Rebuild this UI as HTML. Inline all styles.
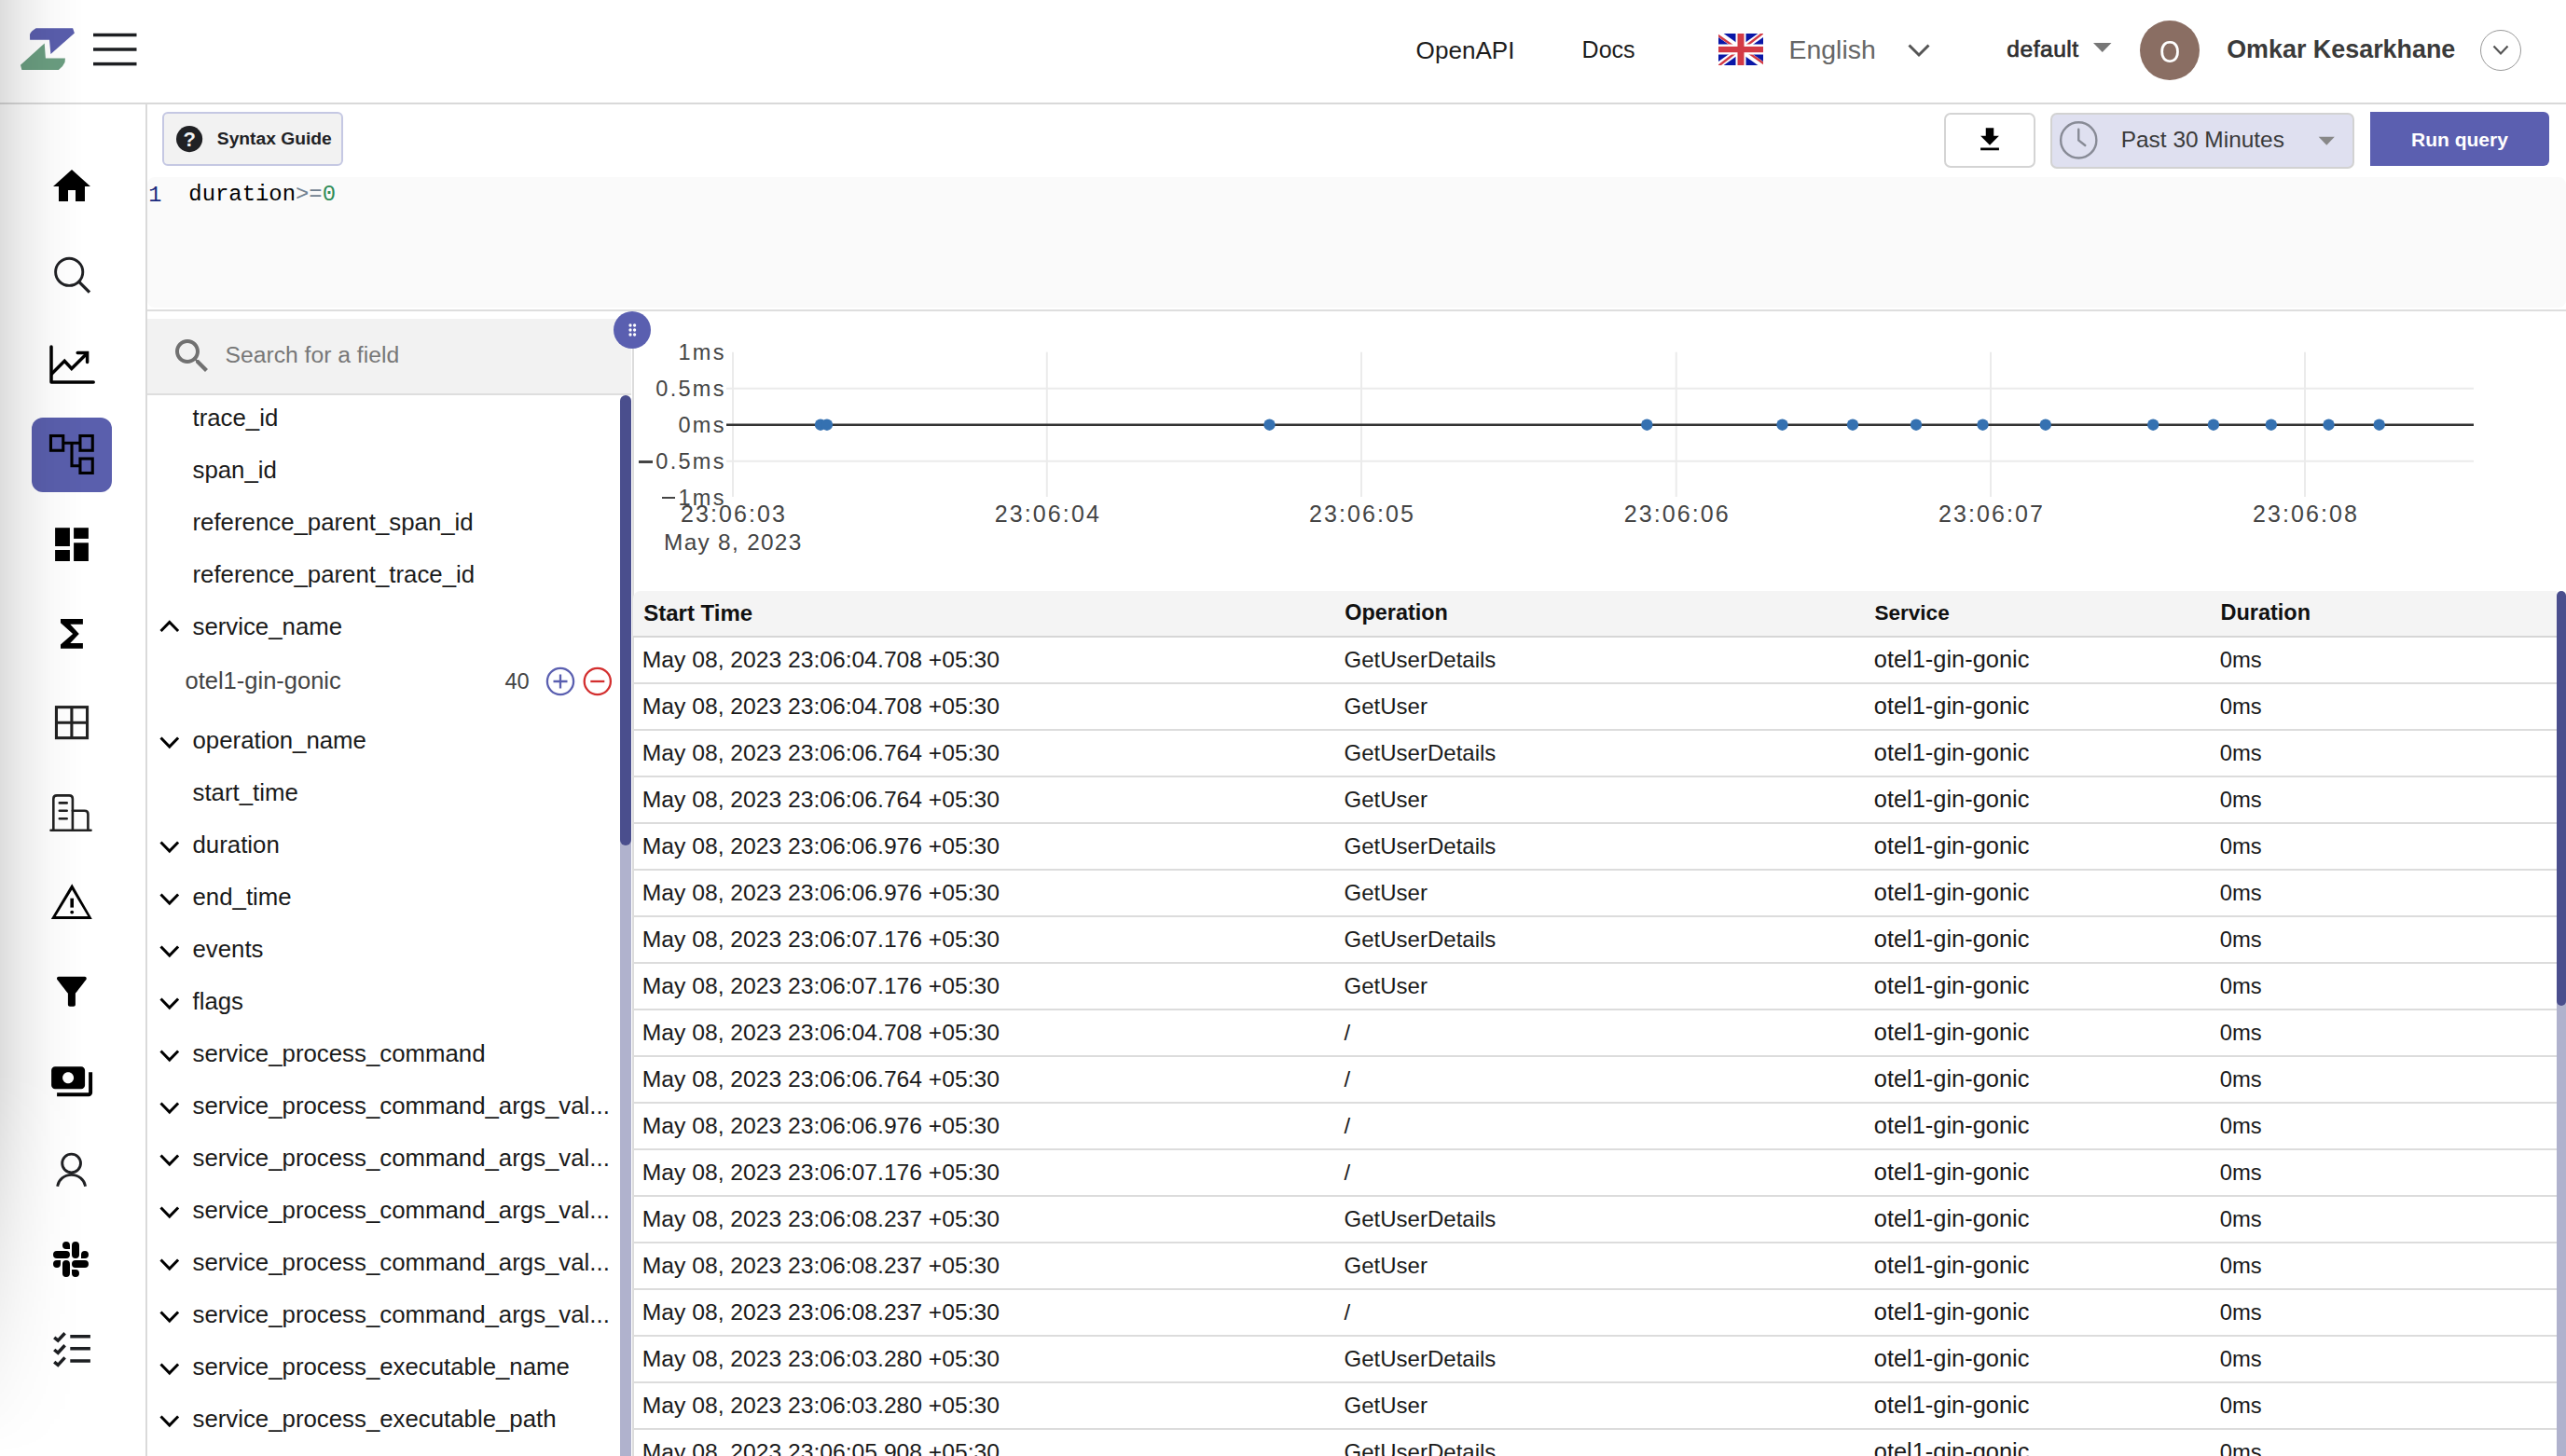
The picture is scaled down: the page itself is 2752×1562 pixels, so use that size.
<!DOCTYPE html>
<html><head><meta charset="utf-8"><title>Traces</title>
<style>
html,body{margin:0;padding:0;}
body{width:2752px;height:1562px;overflow:hidden;position:relative;background:#fff;font-family:"Liberation Sans",sans-serif;}
.t{position:absolute;white-space:nowrap;}
.r{position:absolute;}
svg{position:absolute;overflow:visible;}
</style></head><body>

<div class="r" style="left:0px;top:110px;width:2752px;height:2px;background:#d9d9d9;"></div>
<svg style="left:0;top:0" width="160" height="110" viewBox="0 0 160 110">
<path d="M38.6 30.2 L78.1 30.2 L79.9 35.5 L54.4 58 L53 42.8 L32.1 42.8 L32 37 Q33 33.5 38.6 30.2 Z" fill="#5a5ead"/>
<path d="M47.7 46.6 L48.9 62.4 L69.9 62.4 L69.6 66.8 Q68 71 62.9 75 L23.4 75 L22 69.7 Z" fill="#6b9e81"/>
<rect x="100" y="35.75" width="46.5" height="3.5" fill="#1d1f22"/>
<rect x="100" y="51.25" width="46.5" height="3.5" fill="#1d1f22"/>
<rect x="100" y="66.85" width="46.5" height="3.5" fill="#1d1f22"/>
</svg>
<div class="t" style="left:1518.60px;top:40.50px;font-size:26.1px;line-height:26.1px;font-weight:400;color:#1c1c1c;font-family:'Liberation Sans', sans-serif;">OpenAPI</div>
<div class="t" style="left:1696.60px;top:41.43px;font-size:25.0px;line-height:25.0px;font-weight:400;color:#1c1c1c;font-family:'Liberation Sans', sans-serif;">Docs</div>
<svg style="left:1843px;top:36px" width="48" height="34" viewBox="0 0 48 34" preserveAspectRatio="none">
<defs><clipPath id="fc"><rect width="48" height="34"/></clipPath></defs>
<g clip-path="url(#fc)">
<rect width="48" height="34" fill="#0a17a7"/>
<path d="M0 0 L48 34 M48 0 L0 34" stroke="#fff" stroke-width="6.5"/>
<path d="M-1 1.6 L22 17.8 M49 -1.6 L26 16.2 M-1 35.6 L22 17.8 M49 32.4 L26 16.2" stroke="#d33a45" stroke-width="2.4"/>
<rect x="18.5" y="0" width="11" height="34" fill="#fff"/>
<rect x="0" y="11.5" width="48" height="11" fill="#fff"/>
<rect x="20.5" y="0" width="7" height="34" fill="#d33a45"/>
<rect x="0" y="13.9" width="48" height="6.3" fill="#d33a45"/>
</g></svg>
<div class="t" style="left:1918.60px;top:38.55px;font-size:28.4px;line-height:28.4px;font-weight:400;color:#666666;font-family:'Liberation Sans', sans-serif;">English</div>
<svg style="left:2040px;top:40px" width="36" height="28" viewBox="0 0 36 28"><path d="M7.5 8.5 L18 19 L28.5 8.5" fill="none" stroke="#555" stroke-width="3"/></svg>
<div class="t" style="left:2152.30px;top:41.27px;font-size:24.6px;line-height:24.6px;font-weight:400;color:#2e2e2e;font-family:'Liberation Sans', sans-serif;letter-spacing:0.5px;-webkit-text-stroke:0.7px #2e2e2e;">default</div>
<svg style="left:2240px;top:40px" width="30" height="20"><path d="M5 5.9 L24.5 5.9 L14.75 16 Z" fill="#777"/></svg>
<div style="position:absolute;left:2295px;top:21.6px;width:64px;height:64px;border-radius:50%;background:#8a6e63;"></div>
<div class="t" style="left:2027.00px;width:600px;text-align:center;top:37.71px;font-size:34px;line-height:34px;font-weight:400;color:#ffffff;font-family:'Liberation Sans', sans-serif;transform:scaleX(0.84);">O</div>
<div class="t" style="left:2388.20px;top:40.02px;font-size:26.9px;line-height:26.9px;font-weight:700;color:#3a3a3a;font-family:'Liberation Sans', sans-serif;">Omkar Kesarkhane</div>
<div style="position:absolute;left:2659.7px;top:31.8px;width:42.5px;height:42.5px;border-radius:50%;border:1.2px solid #9a9a9a;"></div>
<svg style="left:2660px;top:32px" width="44" height="44"><path d="M14.5 17.5 L22 25.5 L29.5 17.5" fill="none" stroke="#555" stroke-width="2.2"/></svg>
<div class="r" style="left:156px;top:112px;width:2px;height:1450px;background:#dadada;"></div>
<div class="r" style="left:34px;top:448px;width:86px;height:80px;background:#5a5fad;border-radius:12px;"></div>
<svg style="left:0;top:0" width="156" height="1562" viewBox="0 0 156 1562">
<!-- home -->
<path transform="translate(53 176) scale(2)" d="M10 20v-6h4v6h5v-8h3L12 3 2 12h3v8z" fill="#000"/>
<!-- search -->
<circle cx="74.2" cy="291.8" r="14.6" fill="none" stroke="#202124" stroke-width="2.9"/>
<path d="M85 302.6 L96 313.6" stroke="#202124" stroke-width="3.3"/>
<!-- chart -->
<path d="M55 372 L55 410 L100.2 410" fill="none" stroke="#000" stroke-width="3.5" stroke-linecap="round" stroke-linejoin="round"/>
<path d="M55 401.4 L69.2 387.3 L76.8 395.5 L93.2 379.2" fill="none" stroke="#000" stroke-width="3.5" stroke-linejoin="miter"/>
<path d="M83.2 378.6 L93.6 378.6 L93.6 388.5" fill="none" stroke="#000" stroke-width="3.5" stroke-linecap="round"/>
<!-- traces -->
<g fill="none" stroke="#000" stroke-width="3.1">
<rect x="54.45" y="467.55" width="13.3" height="15.7"/>
<rect x="85.95" y="467.55" width="13.3" height="15.7"/>
<rect x="85.95" y="492.05" width="13.3" height="15.4"/>
<path d="M67.75 475.3 L85.95 475.3 M77 475.3 L77 499.7 L85.95 499.7"/>
</g>
<!-- dashboards -->
<g fill="#000">
<rect x="59.1" y="566.2" width="15.8" height="19.8"/>
<rect x="79.1" y="566.2" width="15.8" height="11.7"/>
<rect x="59.1" y="590" width="15.8" height="12"/>
<rect x="79.1" y="582.3" width="15.8" height="19.7"/>
</g>
<!-- sigma -->
<path d="M65 663.9 L88.9 663.9 L88.9 669.8 L75.3 669.8 L84.8 679.9 L75.3 690 L88.9 690 L88.9 695.8 L65 695.8 L65 691.6 L78.1 679.9 L65 668.2 Z" fill="#000"/>
<!-- grid -->
<g fill="none" stroke="#222" stroke-width="3.1">
<rect x="60.45" y="758.65" width="33.1" height="33"/>
<path d="M76.9 758.65 L76.9 791.65 M60.45 775.2 L93.55 775.2"/>
</g>
<!-- building -->
<g fill="none" stroke="#222" stroke-width="2.6" stroke-linecap="round" stroke-linejoin="round">
<path d="M54.5 890.8 L97.5 890.8"/>
<path d="M57.3 890.8 L57.3 857 Q57.3 853.4 61 853.4 L74.2 853.4 Q77.9 853.4 77.9 857 L77.9 890.8"/>
<path d="M77.9 869.7 L90.7 869.7 Q94.4 869.7 94.4 873.4 L94.4 890.8"/>
<path d="M63.8 861.4 L71.7 861.4 M63.8 869.7 L71.7 869.7 M63.8 878.3 L71.7 878.3"/>
</g>
<!-- warning -->
<path d="M77.2 948.3 L54.8 986 L98.8 986 Z M77.2 954.4 L59.8 983 L94.2 983 Z" fill="#000" fill-rule="evenodd"/><rect x="75.4" y="963.7" width="3.6" height="9.9" fill="#000"/><circle cx="77.2" cy="978.6" r="1.9" fill="#000"/>
<!-- funnel -->
<path transform="translate(52.9 1039.8) scale(2)" d="M4.25 5.61C6.27 8.2 10 13 10 13v6c0 .55.45 1 1 1h2c.55 0 1-.45 1-1v-6s3.72-4.8 5.74-7.39c.51-.66.04-1.61-.79-1.61H5.04c-.83 0-1.3.95-.79 1.61z" fill="#000"/>
<!-- payments -->
<path transform="translate(53.1 1136.2) scale(2)" d="M19 14V6c0-1.1-.9-2-2-2H3c-1.1 0-2 .9-2 2v8c0 1.1.9 2 2 2h14c1.1 0 2-.9 2-2zm-9-1c-1.66 0-3-1.34-3-3s1.34-3 3-3 3 1.34 3 3-1.34 3-3 3zm13-6v11c0 1.1-.9 2-2 2H4v-2h17V7h2z" fill="#000"/>
<!-- person -->
<g fill="none" stroke="#202124" stroke-width="2.9">
<circle cx="76.6" cy="1248" r="9.9"/>
<path d="M61.7 1272.8 A15 14 0 0 1 91.5 1272.8"/>
</g>
<!-- slack -->
<path transform="translate(57 1332) scale(1.583)" fill="#000" d="M5.042 15.165a2.528 2.528 0 0 1-2.52 2.523A2.528 2.528 0 0 1 0 15.165a2.527 2.527 0 0 1 2.522-2.52h2.52v2.52zM6.313 15.165a2.527 2.527 0 0 1 2.521-2.52 2.527 2.527 0 0 1 2.521 2.52v6.313A2.528 2.528 0 0 1 8.834 24a2.528 2.528 0 0 1-2.521-2.522v-6.313zM8.834 5.042a2.528 2.528 0 0 1-2.521-2.52A2.528 2.528 0 0 1 8.834 0a2.528 2.528 0 0 1 2.521 2.522v2.52H8.834zM8.834 6.313a2.528 2.528 0 0 1 2.521 2.521 2.528 2.528 0 0 1-2.521 2.521H2.522A2.528 2.528 0 0 1 0 8.834a2.528 2.528 0 0 1 2.522-2.521h6.312zM18.956 8.834a2.528 2.528 0 0 1 2.522-2.521A2.528 2.528 0 0 1 24 8.834a2.528 2.528 0 0 1-2.522 2.521h-2.522V8.834zM17.688 8.834a2.528 2.528 0 0 1-2.523 2.521 2.527 2.527 0 0 1-2.52-2.521V2.522A2.527 2.527 0 0 1 15.165 0a2.528 2.528 0 0 1 2.523 2.522v6.312zM15.165 18.956a2.528 2.528 0 0 1 2.523 2.522A2.528 2.528 0 0 1 15.165 24a2.527 2.527 0 0 1-2.52-2.522v-2.522h2.52zM15.165 17.688a2.527 2.527 0 0 1-2.52-2.523 2.526 2.526 0 0 1 2.52-2.52h6.313A2.527 2.527 0 0 1 24 15.165a2.528 2.528 0 0 1-2.522 2.523h-6.313z"/>
<!-- checklist -->
<g fill="none" stroke="#1d1f22" stroke-width="3.5">
<path d="M75.3 1433.75 L96.9 1433.75 M75.3 1446.8 L96.9 1446.8 M75.3 1460 L96.9 1460"/>
<path d="M58.2 1434.9 L62.2 1438.2 L69.6 1430.2 M58.2 1448 L62.2 1451.3 L69.6 1443.3 M58.2 1461.1 L62.2 1464.4 L69.6 1456.4"/>
</g>
</svg>
<div style="position:absolute;left:174.3px;top:120.3px;width:189.4px;height:53.3px;border:2px solid #c5c8e3;border-radius:6px;background:#f2f2f2;"></div>
<svg style="left:189px;top:134.7px" width="28.2" height="28.2" viewBox="0 0 28.2 28.2"><circle cx="14.1" cy="14.1" r="14.1" fill="#202124"/></svg>
<div class="t" style="left:-96.90px;width:600px;text-align:center;top:138.87px;font-size:22px;line-height:22px;font-weight:700;color:#f2f2f2;font-family:'Liberation Sans', sans-serif;">?</div>
<div class="t" style="left:232.80px;top:138.70px;font-size:19.25px;line-height:19.25px;font-weight:700;color:#202124;font-family:'Liberation Sans', sans-serif;">Syntax Guide</div>
<div style="position:absolute;left:2085.4px;top:120.6px;width:93.6px;height:55px;border:2px solid #d4d4d4;border-radius:7px;background:#fff;"></div>
<svg style="left:2116.9px;top:132.8px" width="34" height="34" viewBox="0 0 24 24" transform=""><path transform="scale(1)" d="M19 9h-4V3H9v6H5l7 7 7-7zM5 18v2h14v-2H5z" fill="#000"/></svg>
<div style="position:absolute;left:2199.4px;top:120.6px;width:322.1px;height:56.8px;border:2px solid #d2d2d2;border-radius:7px;background:#dfe0f0;"></div>
<svg style="left:2200px;top:121px" width="60" height="60"><g fill="none" stroke="#888b96" stroke-width="2.4" stroke-linecap="round"><circle cx="29.25" cy="29.4" r="19.1"/><path d="M29.25 17.7 L29.25 29.4 L36.3 35"/></g></svg>
<div class="t" style="left:2274.70px;top:137.70px;font-size:24.45px;line-height:24.45px;font-weight:400;color:#3a3a3a;font-family:'Liberation Sans', sans-serif;">Past 30 Minutes</div>
<svg style="left:2480px;top:140px" width="30" height="20"><path d="M6.7 6.7 L23.8 6.7 L15.25 15.7 Z" fill="#888"/></svg>
<div style="position:absolute;left:2542px;top:120px;width:192px;height:57.8px;border-radius:0 6px 6px 0;background:#5b5fb0;"></div>
<div class="t" style="left:2586.00px;top:139.19px;font-size:21.03px;line-height:21.03px;font-weight:700;color:#ffffff;font-family:'Liberation Sans', sans-serif;">Run query</div>
<div class="r" style="left:158px;top:190px;width:2594px;height:140px;background:#fafafa;border-radius:8px;"></div>
<div class="r" style="left:158px;top:332px;width:2594px;height:2px;background:#dedede;"></div>
<div class="t" style="left:159.30px;top:197.72px;font-size:23.6px;line-height:23.6px;font-weight:400;color:#1b2a7d;font-family:'Liberation Mono', monospace;">1</div>
<div class="t" style="left:202.3px;top:197.49px;font-size:23.9px;line-height:23.9px;font-family:'Liberation Mono', monospace;color:#000;">duration<span style="color:#708090">&gt;=</span><span style="color:#2e8b57">0</span></div>
<div class="r" style="left:158px;top:342px;width:519px;height:80px;background:#f2f2f2;"></div>
<div class="r" style="left:158px;top:422px;width:519px;height:2px;background:#dedede;"></div>
<svg style="left:182.1px;top:358px" width="48" height="48" viewBox="0 0 24 24"><path d="M15.5 14h-.79l-.28-.27C15.41 12.59 16 11.11 16 9.5 16 5.91 13.09 3 9.5 3S3 5.91 3 9.5 5.91 16 9.5 16c1.61 0 3.09-.59 4.23-1.57l.27.28v.79l5 4.99L20.49 19l-4.99-5zm-6 0C7.01 14 5 11.99 5 9.5S7.01 5 9.5 5 14 7.01 14 9.5 11.99 14 9.5 14z" fill="#717171"/></svg>
<div class="t" style="left:241.50px;top:369.09px;font-size:24.7px;line-height:24.7px;font-weight:400;color:#777777;font-family:'Liberation Sans', sans-serif;">Search for a field</div>
<div class="t" style="left:206.50px;top:435.66px;font-size:25.8px;line-height:25.8px;font-weight:400;color:#1a1a1a;font-family:'Liberation Sans', sans-serif;">trace_id</div>
<div class="t" style="left:206.50px;top:491.66px;font-size:25.8px;line-height:25.8px;font-weight:400;color:#1a1a1a;font-family:'Liberation Sans', sans-serif;">span_id</div>
<div class="t" style="left:206.50px;top:547.66px;font-size:25.8px;line-height:25.8px;font-weight:400;color:#1a1a1a;font-family:'Liberation Sans', sans-serif;">reference_parent_span_id</div>
<div class="t" style="left:206.50px;top:603.66px;font-size:25.8px;line-height:25.8px;font-weight:400;color:#1a1a1a;font-family:'Liberation Sans', sans-serif;">reference_parent_trace_id</div>
<div class="t" style="left:206.50px;top:659.76px;font-size:25.8px;line-height:25.8px;font-weight:400;color:#1a1a1a;font-family:'Liberation Sans', sans-serif;">service_name</div>
<svg style="left:160px;top:650px" width="40" height="40"><path d="M12.5 27 L21.8 17.5 L31.1 27" fill="none" stroke="#000" stroke-width="3"/></svg>
<div class="t" style="left:198.50px;top:717.71px;font-size:25.5px;line-height:25.5px;font-weight:400;color:#444444;font-family:'Liberation Sans', sans-serif;">otel1-gin-gonic</div>
<div class="t" style="left:541.50px;top:720.32px;font-size:23.6px;line-height:23.6px;font-weight:400;color:#444444;font-family:'Liberation Sans', sans-serif;">40</div>
<svg style="left:580px;top:710px" width="82" height="42"><circle cx="21" cy="21" r="14.1" fill="none" stroke="#5a5fb0" stroke-width="2.3"/><path d="M21 13.5 L21 28.5 M13.5 21 L28.5 21" stroke="#5a5fb0" stroke-width="2.3"/><circle cx="60.8" cy="21" r="14.1" fill="none" stroke="#d32f2f" stroke-width="2.3"/><path d="M53.3 21 L68.3 21" stroke="#d32f2f" stroke-width="2.3"/></svg>
<div class="t" style="left:206.50px;top:781.96px;font-size:25.8px;line-height:25.8px;font-weight:400;color:#1a1a1a;font-family:'Liberation Sans', sans-serif;">operation_name</div>
<svg style="left:160px;top:773px" width="40" height="40"><path d="M12.5 18.5 L21.8 28 L31.1 18.5" fill="none" stroke="#000" stroke-width="3"/></svg>
<div class="t" style="left:206.50px;top:837.96px;font-size:25.8px;line-height:25.8px;font-weight:400;color:#1a1a1a;font-family:'Liberation Sans', sans-serif;">start_time</div>
<div class="t" style="left:206.50px;top:893.96px;font-size:25.8px;line-height:25.8px;font-weight:400;color:#1a1a1a;font-family:'Liberation Sans', sans-serif;">duration</div>
<svg style="left:160px;top:885px" width="40" height="40"><path d="M12.5 18.5 L21.8 28 L31.1 18.5" fill="none" stroke="#000" stroke-width="3"/></svg>
<div class="t" style="left:206.50px;top:949.96px;font-size:25.8px;line-height:25.8px;font-weight:400;color:#1a1a1a;font-family:'Liberation Sans', sans-serif;">end_time</div>
<svg style="left:160px;top:941px" width="40" height="40"><path d="M12.5 18.5 L21.8 28 L31.1 18.5" fill="none" stroke="#000" stroke-width="3"/></svg>
<div class="t" style="left:206.50px;top:1005.96px;font-size:25.8px;line-height:25.8px;font-weight:400;color:#1a1a1a;font-family:'Liberation Sans', sans-serif;">events</div>
<svg style="left:160px;top:997px" width="40" height="40"><path d="M12.5 18.5 L21.8 28 L31.1 18.5" fill="none" stroke="#000" stroke-width="3"/></svg>
<div class="t" style="left:206.50px;top:1061.96px;font-size:25.8px;line-height:25.8px;font-weight:400;color:#1a1a1a;font-family:'Liberation Sans', sans-serif;">flags</div>
<svg style="left:160px;top:1053px" width="40" height="40"><path d="M12.5 18.5 L21.8 28 L31.1 18.5" fill="none" stroke="#000" stroke-width="3"/></svg>
<div class="t" style="left:206.50px;top:1117.96px;font-size:25.8px;line-height:25.8px;font-weight:400;color:#1a1a1a;font-family:'Liberation Sans', sans-serif;">service_process_command</div>
<svg style="left:160px;top:1109px" width="40" height="40"><path d="M12.5 18.5 L21.8 28 L31.1 18.5" fill="none" stroke="#000" stroke-width="3"/></svg>
<div class="t" style="left:206.50px;top:1173.96px;font-size:25.8px;line-height:25.8px;font-weight:400;color:#1a1a1a;font-family:'Liberation Sans', sans-serif;">service_process_command_args_val...</div>
<svg style="left:160px;top:1165px" width="40" height="40"><path d="M12.5 18.5 L21.8 28 L31.1 18.5" fill="none" stroke="#000" stroke-width="3"/></svg>
<div class="t" style="left:206.50px;top:1229.96px;font-size:25.8px;line-height:25.8px;font-weight:400;color:#1a1a1a;font-family:'Liberation Sans', sans-serif;">service_process_command_args_val...</div>
<svg style="left:160px;top:1221px" width="40" height="40"><path d="M12.5 18.5 L21.8 28 L31.1 18.5" fill="none" stroke="#000" stroke-width="3"/></svg>
<div class="t" style="left:206.50px;top:1285.96px;font-size:25.8px;line-height:25.8px;font-weight:400;color:#1a1a1a;font-family:'Liberation Sans', sans-serif;">service_process_command_args_val...</div>
<svg style="left:160px;top:1277px" width="40" height="40"><path d="M12.5 18.5 L21.8 28 L31.1 18.5" fill="none" stroke="#000" stroke-width="3"/></svg>
<div class="t" style="left:206.50px;top:1341.96px;font-size:25.8px;line-height:25.8px;font-weight:400;color:#1a1a1a;font-family:'Liberation Sans', sans-serif;">service_process_command_args_val...</div>
<svg style="left:160px;top:1333px" width="40" height="40"><path d="M12.5 18.5 L21.8 28 L31.1 18.5" fill="none" stroke="#000" stroke-width="3"/></svg>
<div class="t" style="left:206.50px;top:1397.96px;font-size:25.8px;line-height:25.8px;font-weight:400;color:#1a1a1a;font-family:'Liberation Sans', sans-serif;">service_process_command_args_val...</div>
<svg style="left:160px;top:1389px" width="40" height="40"><path d="M12.5 18.5 L21.8 28 L31.1 18.5" fill="none" stroke="#000" stroke-width="3"/></svg>
<div class="t" style="left:206.50px;top:1453.96px;font-size:25.8px;line-height:25.8px;font-weight:400;color:#1a1a1a;font-family:'Liberation Sans', sans-serif;">service_process_executable_name</div>
<svg style="left:160px;top:1445px" width="40" height="40"><path d="M12.5 18.5 L21.8 28 L31.1 18.5" fill="none" stroke="#000" stroke-width="3"/></svg>
<div class="t" style="left:206.50px;top:1509.96px;font-size:25.8px;line-height:25.8px;font-weight:400;color:#1a1a1a;font-family:'Liberation Sans', sans-serif;">service_process_executable_path</div>
<svg style="left:160px;top:1501px" width="40" height="40"><path d="M12.5 18.5 L21.8 28 L31.1 18.5" fill="none" stroke="#000" stroke-width="3"/></svg>
<div class="r" style="left:665px;top:440px;width:12px;height:1122px;background:#b0b2cd;"></div>
<div class="r" style="left:665px;top:424px;width:12px;height:482.5px;background:#4a4e8d;border-radius:6px;"></div>
<div class="r" style="left:678px;top:374px;width:2px;height:1188px;background:#dcdcdc;"></div>
<svg style="left:658px;top:334px" width="40" height="40"><circle cx="20" cy="20" r="20" fill="#5a5fb0"/><g fill="#fff"><circle cx="18" cy="15" r="1.65"/><circle cx="22.6" cy="15" r="1.65"/><circle cx="18" cy="20" r="1.65"/><circle cx="22.6" cy="20" r="1.65"/><circle cx="18" cy="25" r="1.65"/><circle cx="22.6" cy="25" r="1.65"/></g></svg>
<svg style="left:0;top:0" width="2752" height="640" viewBox="0 0 2752 640">
<path d="M786 377.7 L786 533" stroke="#ebebeb" stroke-width="2"/>
<path d="M1122.8 377.7 L1122.8 533" stroke="#ebebeb" stroke-width="2"/>
<path d="M1460 377.7 L1460 533" stroke="#ebebeb" stroke-width="2"/>
<path d="M1797.7 377.7 L1797.7 533" stroke="#ebebeb" stroke-width="2"/>
<path d="M2135 377.7 L2135 533" stroke="#ebebeb" stroke-width="2"/>
<path d="M2472 377.7 L2472 533" stroke="#ebebeb" stroke-width="2"/>
<path d="M779 416.7 L2653 416.7" stroke="#ebebeb" stroke-width="2"/>
<path d="M779 494.8 L2653 494.8" stroke="#ebebeb" stroke-width="2"/>
<path d="M779 455.7 L2653 455.7" stroke="#333" stroke-width="2.6"/>
<circle cx="880" cy="455.7" r="6.2" fill="#3571b1"/>
<circle cx="886.9" cy="455.7" r="6.2" fill="#3571b1"/>
<circle cx="1361.5" cy="455.7" r="6.2" fill="#3571b1"/>
<circle cx="1766.3" cy="455.7" r="6.2" fill="#3571b1"/>
<circle cx="1911.5" cy="455.7" r="6.2" fill="#3571b1"/>
<circle cx="1987" cy="455.7" r="6.2" fill="#3571b1"/>
<circle cx="2055" cy="455.7" r="6.2" fill="#3571b1"/>
<circle cx="2126.5" cy="455.7" r="6.2" fill="#3571b1"/>
<circle cx="2193.8" cy="455.7" r="6.2" fill="#3571b1"/>
<circle cx="2309.2" cy="455.7" r="6.2" fill="#3571b1"/>
<circle cx="2373.9" cy="455.7" r="6.2" fill="#3571b1"/>
<circle cx="2435.8" cy="455.7" r="6.2" fill="#3571b1"/>
<circle cx="2497.5" cy="455.7" r="6.2" fill="#3571b1"/>
<circle cx="2551.7" cy="455.7" r="6.2" fill="#3571b1"/>
</svg>
<div class="t" style="right:1975.50px;top:367.30px;font-size:23.5px;line-height:23.5px;font-weight:400;color:#444444;font-family:'Liberation Sans', sans-serif;text-align:right;letter-spacing:2.3px;margin-right:-2.3px;">1ms</div>
<div class="t" style="right:1975.50px;top:406.30px;font-size:23.5px;line-height:23.5px;font-weight:400;color:#444444;font-family:'Liberation Sans', sans-serif;text-align:right;letter-spacing:2.3px;margin-right:-2.3px;">0.5ms</div>
<div class="t" style="right:1975.50px;top:445.30px;font-size:23.5px;line-height:23.5px;font-weight:400;color:#444444;font-family:'Liberation Sans', sans-serif;text-align:right;letter-spacing:2.3px;margin-right:-2.3px;">0ms</div>
<div class="t" style="right:1975.50px;top:484.30px;font-size:23.5px;line-height:23.5px;font-weight:400;color:#444444;font-family:'Liberation Sans', sans-serif;text-align:right;letter-spacing:2.3px;margin-right:-2.3px;"><span style="display:inline-block;width:14.5px;height:2.2px;background:#444;vertical-align:6.8px;margin-right:3.5px"></span>0.5ms</div>
<div class="t" style="right:1975.50px;top:523.10px;font-size:23.5px;line-height:23.5px;font-weight:400;color:#444444;font-family:'Liberation Sans', sans-serif;text-align:right;letter-spacing:2.3px;margin-right:-2.3px;"><span style="display:inline-block;width:14.5px;height:2.2px;background:#444;vertical-align:6.8px;margin-right:3.5px"></span>1ms</div>
<div class="t" style="left:486.00px;width:600px;text-align:center;top:538.83px;font-size:25px;line-height:25px;font-weight:400;color:#444444;font-family:'Liberation Sans', sans-serif;letter-spacing:2.1px;text-indent:2.1px;">23:06:03</div>
<div class="t" style="left:822.80px;width:600px;text-align:center;top:538.83px;font-size:25px;line-height:25px;font-weight:400;color:#444444;font-family:'Liberation Sans', sans-serif;letter-spacing:2.1px;text-indent:2.1px;">23:06:04</div>
<div class="t" style="left:1160.00px;width:600px;text-align:center;top:538.83px;font-size:25px;line-height:25px;font-weight:400;color:#444444;font-family:'Liberation Sans', sans-serif;letter-spacing:2.1px;text-indent:2.1px;">23:06:05</div>
<div class="t" style="left:1497.70px;width:600px;text-align:center;top:538.83px;font-size:25px;line-height:25px;font-weight:400;color:#444444;font-family:'Liberation Sans', sans-serif;letter-spacing:2.1px;text-indent:2.1px;">23:06:06</div>
<div class="t" style="left:1835.00px;width:600px;text-align:center;top:538.83px;font-size:25px;line-height:25px;font-weight:400;color:#444444;font-family:'Liberation Sans', sans-serif;letter-spacing:2.1px;text-indent:2.1px;">23:06:07</div>
<div class="t" style="left:2172.00px;width:600px;text-align:center;top:538.83px;font-size:25px;line-height:25px;font-weight:400;color:#444444;font-family:'Liberation Sans', sans-serif;letter-spacing:2.1px;text-indent:2.1px;">23:06:08</div>
<div class="t" style="left:485.70px;width:600px;text-align:center;top:570.24px;font-size:24.4px;line-height:24.4px;font-weight:400;color:#444444;font-family:'Liberation Sans', sans-serif;letter-spacing:1.3px;text-indent:1.3px;">May 8, 2023</div>
<div class="r" style="left:679.4px;top:634px;width:2062.6px;height:49px;background:#f4f4f4;border-top-left-radius:8px;"></div>
<div class="r" style="left:679.4px;top:682px;width:2062.6px;height:2px;background:#d6d6d6;"></div>
<div class="t" style="left:690.30px;top:645.69px;font-size:23.99px;line-height:23.99px;font-weight:700;color:#111111;font-family:'Liberation Sans', sans-serif;">Start Time</div>
<div class="t" style="left:1442.30px;top:646.19px;font-size:23.4px;line-height:23.4px;font-weight:700;color:#111111;font-family:'Liberation Sans', sans-serif;">Operation</div>
<div class="t" style="left:2010.50px;top:646.92px;font-size:22.54px;line-height:22.54px;font-weight:700;color:#111111;font-family:'Liberation Sans', sans-serif;">Service</div>
<div class="t" style="left:2381.50px;top:646.13px;font-size:23.47px;line-height:23.47px;font-weight:700;color:#111111;font-family:'Liberation Sans', sans-serif;">Duration</div>
<div class="t" style="left:688.80px;top:695.61px;font-size:24.67px;line-height:24.67px;font-weight:400;color:#1a1a1a;font-family:'Liberation Sans', sans-serif;">May 08, 2023 23:06:04.708 +05:30</div>
<div class="t" style="left:1441.60px;top:696.18px;font-size:24.0px;line-height:24.0px;font-weight:400;color:#1a1a1a;font-family:'Liberation Sans', sans-serif;">GetUserDetails</div>
<div class="t" style="left:2009.80px;top:694.99px;font-size:25.4px;line-height:25.4px;font-weight:400;color:#1a1a1a;font-family:'Liberation Sans', sans-serif;">otel1-gin-gonic</div>
<div class="t" style="left:2380.80px;top:696.35px;font-size:23.8px;line-height:23.8px;font-weight:400;color:#1a1a1a;font-family:'Liberation Sans', sans-serif;">0ms</div>
<div class="r" style="left:679.4px;top:732px;width:2062.6px;height:2px;background:#dcdcdc;"></div>
<div class="t" style="left:688.80px;top:745.61px;font-size:24.67px;line-height:24.67px;font-weight:400;color:#1a1a1a;font-family:'Liberation Sans', sans-serif;">May 08, 2023 23:06:04.708 +05:30</div>
<div class="t" style="left:1441.60px;top:746.18px;font-size:24.0px;line-height:24.0px;font-weight:400;color:#1a1a1a;font-family:'Liberation Sans', sans-serif;">GetUser</div>
<div class="t" style="left:2009.80px;top:744.99px;font-size:25.4px;line-height:25.4px;font-weight:400;color:#1a1a1a;font-family:'Liberation Sans', sans-serif;">otel1-gin-gonic</div>
<div class="t" style="left:2380.80px;top:746.35px;font-size:23.8px;line-height:23.8px;font-weight:400;color:#1a1a1a;font-family:'Liberation Sans', sans-serif;">0ms</div>
<div class="r" style="left:679.4px;top:782px;width:2062.6px;height:2px;background:#dcdcdc;"></div>
<div class="t" style="left:688.80px;top:795.61px;font-size:24.67px;line-height:24.67px;font-weight:400;color:#1a1a1a;font-family:'Liberation Sans', sans-serif;">May 08, 2023 23:06:06.764 +05:30</div>
<div class="t" style="left:1441.60px;top:796.18px;font-size:24.0px;line-height:24.0px;font-weight:400;color:#1a1a1a;font-family:'Liberation Sans', sans-serif;">GetUserDetails</div>
<div class="t" style="left:2009.80px;top:794.99px;font-size:25.4px;line-height:25.4px;font-weight:400;color:#1a1a1a;font-family:'Liberation Sans', sans-serif;">otel1-gin-gonic</div>
<div class="t" style="left:2380.80px;top:796.35px;font-size:23.8px;line-height:23.8px;font-weight:400;color:#1a1a1a;font-family:'Liberation Sans', sans-serif;">0ms</div>
<div class="r" style="left:679.4px;top:832px;width:2062.6px;height:2px;background:#dcdcdc;"></div>
<div class="t" style="left:688.80px;top:845.61px;font-size:24.67px;line-height:24.67px;font-weight:400;color:#1a1a1a;font-family:'Liberation Sans', sans-serif;">May 08, 2023 23:06:06.764 +05:30</div>
<div class="t" style="left:1441.60px;top:846.18px;font-size:24.0px;line-height:24.0px;font-weight:400;color:#1a1a1a;font-family:'Liberation Sans', sans-serif;">GetUser</div>
<div class="t" style="left:2009.80px;top:844.99px;font-size:25.4px;line-height:25.4px;font-weight:400;color:#1a1a1a;font-family:'Liberation Sans', sans-serif;">otel1-gin-gonic</div>
<div class="t" style="left:2380.80px;top:846.35px;font-size:23.8px;line-height:23.8px;font-weight:400;color:#1a1a1a;font-family:'Liberation Sans', sans-serif;">0ms</div>
<div class="r" style="left:679.4px;top:882px;width:2062.6px;height:2px;background:#dcdcdc;"></div>
<div class="t" style="left:688.80px;top:895.61px;font-size:24.67px;line-height:24.67px;font-weight:400;color:#1a1a1a;font-family:'Liberation Sans', sans-serif;">May 08, 2023 23:06:06.976 +05:30</div>
<div class="t" style="left:1441.60px;top:896.18px;font-size:24.0px;line-height:24.0px;font-weight:400;color:#1a1a1a;font-family:'Liberation Sans', sans-serif;">GetUserDetails</div>
<div class="t" style="left:2009.80px;top:894.99px;font-size:25.4px;line-height:25.4px;font-weight:400;color:#1a1a1a;font-family:'Liberation Sans', sans-serif;">otel1-gin-gonic</div>
<div class="t" style="left:2380.80px;top:896.35px;font-size:23.8px;line-height:23.8px;font-weight:400;color:#1a1a1a;font-family:'Liberation Sans', sans-serif;">0ms</div>
<div class="r" style="left:679.4px;top:932px;width:2062.6px;height:2px;background:#dcdcdc;"></div>
<div class="t" style="left:688.80px;top:945.61px;font-size:24.67px;line-height:24.67px;font-weight:400;color:#1a1a1a;font-family:'Liberation Sans', sans-serif;">May 08, 2023 23:06:06.976 +05:30</div>
<div class="t" style="left:1441.60px;top:946.18px;font-size:24.0px;line-height:24.0px;font-weight:400;color:#1a1a1a;font-family:'Liberation Sans', sans-serif;">GetUser</div>
<div class="t" style="left:2009.80px;top:944.99px;font-size:25.4px;line-height:25.4px;font-weight:400;color:#1a1a1a;font-family:'Liberation Sans', sans-serif;">otel1-gin-gonic</div>
<div class="t" style="left:2380.80px;top:946.35px;font-size:23.8px;line-height:23.8px;font-weight:400;color:#1a1a1a;font-family:'Liberation Sans', sans-serif;">0ms</div>
<div class="r" style="left:679.4px;top:982px;width:2062.6px;height:2px;background:#dcdcdc;"></div>
<div class="t" style="left:688.80px;top:995.61px;font-size:24.67px;line-height:24.67px;font-weight:400;color:#1a1a1a;font-family:'Liberation Sans', sans-serif;">May 08, 2023 23:06:07.176 +05:30</div>
<div class="t" style="left:1441.60px;top:996.18px;font-size:24.0px;line-height:24.0px;font-weight:400;color:#1a1a1a;font-family:'Liberation Sans', sans-serif;">GetUserDetails</div>
<div class="t" style="left:2009.80px;top:994.99px;font-size:25.4px;line-height:25.4px;font-weight:400;color:#1a1a1a;font-family:'Liberation Sans', sans-serif;">otel1-gin-gonic</div>
<div class="t" style="left:2380.80px;top:996.35px;font-size:23.8px;line-height:23.8px;font-weight:400;color:#1a1a1a;font-family:'Liberation Sans', sans-serif;">0ms</div>
<div class="r" style="left:679.4px;top:1032px;width:2062.6px;height:2px;background:#dcdcdc;"></div>
<div class="t" style="left:688.80px;top:1045.61px;font-size:24.67px;line-height:24.67px;font-weight:400;color:#1a1a1a;font-family:'Liberation Sans', sans-serif;">May 08, 2023 23:06:07.176 +05:30</div>
<div class="t" style="left:1441.60px;top:1046.18px;font-size:24.0px;line-height:24.0px;font-weight:400;color:#1a1a1a;font-family:'Liberation Sans', sans-serif;">GetUser</div>
<div class="t" style="left:2009.80px;top:1044.99px;font-size:25.4px;line-height:25.4px;font-weight:400;color:#1a1a1a;font-family:'Liberation Sans', sans-serif;">otel1-gin-gonic</div>
<div class="t" style="left:2380.80px;top:1046.35px;font-size:23.8px;line-height:23.8px;font-weight:400;color:#1a1a1a;font-family:'Liberation Sans', sans-serif;">0ms</div>
<div class="r" style="left:679.4px;top:1082px;width:2062.6px;height:2px;background:#dcdcdc;"></div>
<div class="t" style="left:688.80px;top:1095.61px;font-size:24.67px;line-height:24.67px;font-weight:400;color:#1a1a1a;font-family:'Liberation Sans', sans-serif;">May 08, 2023 23:06:04.708 +05:30</div>
<div class="t" style="left:1441.60px;top:1096.18px;font-size:24.0px;line-height:24.0px;font-weight:400;color:#1a1a1a;font-family:'Liberation Sans', sans-serif;">/</div>
<div class="t" style="left:2009.80px;top:1094.99px;font-size:25.4px;line-height:25.4px;font-weight:400;color:#1a1a1a;font-family:'Liberation Sans', sans-serif;">otel1-gin-gonic</div>
<div class="t" style="left:2380.80px;top:1096.35px;font-size:23.8px;line-height:23.8px;font-weight:400;color:#1a1a1a;font-family:'Liberation Sans', sans-serif;">0ms</div>
<div class="r" style="left:679.4px;top:1132px;width:2062.6px;height:2px;background:#dcdcdc;"></div>
<div class="t" style="left:688.80px;top:1145.61px;font-size:24.67px;line-height:24.67px;font-weight:400;color:#1a1a1a;font-family:'Liberation Sans', sans-serif;">May 08, 2023 23:06:06.764 +05:30</div>
<div class="t" style="left:1441.60px;top:1146.18px;font-size:24.0px;line-height:24.0px;font-weight:400;color:#1a1a1a;font-family:'Liberation Sans', sans-serif;">/</div>
<div class="t" style="left:2009.80px;top:1144.99px;font-size:25.4px;line-height:25.4px;font-weight:400;color:#1a1a1a;font-family:'Liberation Sans', sans-serif;">otel1-gin-gonic</div>
<div class="t" style="left:2380.80px;top:1146.35px;font-size:23.8px;line-height:23.8px;font-weight:400;color:#1a1a1a;font-family:'Liberation Sans', sans-serif;">0ms</div>
<div class="r" style="left:679.4px;top:1182px;width:2062.6px;height:2px;background:#dcdcdc;"></div>
<div class="t" style="left:688.80px;top:1195.61px;font-size:24.67px;line-height:24.67px;font-weight:400;color:#1a1a1a;font-family:'Liberation Sans', sans-serif;">May 08, 2023 23:06:06.976 +05:30</div>
<div class="t" style="left:1441.60px;top:1196.18px;font-size:24.0px;line-height:24.0px;font-weight:400;color:#1a1a1a;font-family:'Liberation Sans', sans-serif;">/</div>
<div class="t" style="left:2009.80px;top:1194.99px;font-size:25.4px;line-height:25.4px;font-weight:400;color:#1a1a1a;font-family:'Liberation Sans', sans-serif;">otel1-gin-gonic</div>
<div class="t" style="left:2380.80px;top:1196.35px;font-size:23.8px;line-height:23.8px;font-weight:400;color:#1a1a1a;font-family:'Liberation Sans', sans-serif;">0ms</div>
<div class="r" style="left:679.4px;top:1232px;width:2062.6px;height:2px;background:#dcdcdc;"></div>
<div class="t" style="left:688.80px;top:1245.61px;font-size:24.67px;line-height:24.67px;font-weight:400;color:#1a1a1a;font-family:'Liberation Sans', sans-serif;">May 08, 2023 23:06:07.176 +05:30</div>
<div class="t" style="left:1441.60px;top:1246.18px;font-size:24.0px;line-height:24.0px;font-weight:400;color:#1a1a1a;font-family:'Liberation Sans', sans-serif;">/</div>
<div class="t" style="left:2009.80px;top:1244.99px;font-size:25.4px;line-height:25.4px;font-weight:400;color:#1a1a1a;font-family:'Liberation Sans', sans-serif;">otel1-gin-gonic</div>
<div class="t" style="left:2380.80px;top:1246.35px;font-size:23.8px;line-height:23.8px;font-weight:400;color:#1a1a1a;font-family:'Liberation Sans', sans-serif;">0ms</div>
<div class="r" style="left:679.4px;top:1282px;width:2062.6px;height:2px;background:#dcdcdc;"></div>
<div class="t" style="left:688.80px;top:1295.61px;font-size:24.67px;line-height:24.67px;font-weight:400;color:#1a1a1a;font-family:'Liberation Sans', sans-serif;">May 08, 2023 23:06:08.237 +05:30</div>
<div class="t" style="left:1441.60px;top:1296.18px;font-size:24.0px;line-height:24.0px;font-weight:400;color:#1a1a1a;font-family:'Liberation Sans', sans-serif;">GetUserDetails</div>
<div class="t" style="left:2009.80px;top:1294.99px;font-size:25.4px;line-height:25.4px;font-weight:400;color:#1a1a1a;font-family:'Liberation Sans', sans-serif;">otel1-gin-gonic</div>
<div class="t" style="left:2380.80px;top:1296.35px;font-size:23.8px;line-height:23.8px;font-weight:400;color:#1a1a1a;font-family:'Liberation Sans', sans-serif;">0ms</div>
<div class="r" style="left:679.4px;top:1332px;width:2062.6px;height:2px;background:#dcdcdc;"></div>
<div class="t" style="left:688.80px;top:1345.61px;font-size:24.67px;line-height:24.67px;font-weight:400;color:#1a1a1a;font-family:'Liberation Sans', sans-serif;">May 08, 2023 23:06:08.237 +05:30</div>
<div class="t" style="left:1441.60px;top:1346.18px;font-size:24.0px;line-height:24.0px;font-weight:400;color:#1a1a1a;font-family:'Liberation Sans', sans-serif;">GetUser</div>
<div class="t" style="left:2009.80px;top:1344.99px;font-size:25.4px;line-height:25.4px;font-weight:400;color:#1a1a1a;font-family:'Liberation Sans', sans-serif;">otel1-gin-gonic</div>
<div class="t" style="left:2380.80px;top:1346.35px;font-size:23.8px;line-height:23.8px;font-weight:400;color:#1a1a1a;font-family:'Liberation Sans', sans-serif;">0ms</div>
<div class="r" style="left:679.4px;top:1382px;width:2062.6px;height:2px;background:#dcdcdc;"></div>
<div class="t" style="left:688.80px;top:1395.61px;font-size:24.67px;line-height:24.67px;font-weight:400;color:#1a1a1a;font-family:'Liberation Sans', sans-serif;">May 08, 2023 23:06:08.237 +05:30</div>
<div class="t" style="left:1441.60px;top:1396.18px;font-size:24.0px;line-height:24.0px;font-weight:400;color:#1a1a1a;font-family:'Liberation Sans', sans-serif;">/</div>
<div class="t" style="left:2009.80px;top:1394.99px;font-size:25.4px;line-height:25.4px;font-weight:400;color:#1a1a1a;font-family:'Liberation Sans', sans-serif;">otel1-gin-gonic</div>
<div class="t" style="left:2380.80px;top:1396.35px;font-size:23.8px;line-height:23.8px;font-weight:400;color:#1a1a1a;font-family:'Liberation Sans', sans-serif;">0ms</div>
<div class="r" style="left:679.4px;top:1432px;width:2062.6px;height:2px;background:#dcdcdc;"></div>
<div class="t" style="left:688.80px;top:1445.61px;font-size:24.67px;line-height:24.67px;font-weight:400;color:#1a1a1a;font-family:'Liberation Sans', sans-serif;">May 08, 2023 23:06:03.280 +05:30</div>
<div class="t" style="left:1441.60px;top:1446.18px;font-size:24.0px;line-height:24.0px;font-weight:400;color:#1a1a1a;font-family:'Liberation Sans', sans-serif;">GetUserDetails</div>
<div class="t" style="left:2009.80px;top:1444.99px;font-size:25.4px;line-height:25.4px;font-weight:400;color:#1a1a1a;font-family:'Liberation Sans', sans-serif;">otel1-gin-gonic</div>
<div class="t" style="left:2380.80px;top:1446.35px;font-size:23.8px;line-height:23.8px;font-weight:400;color:#1a1a1a;font-family:'Liberation Sans', sans-serif;">0ms</div>
<div class="r" style="left:679.4px;top:1482px;width:2062.6px;height:2px;background:#dcdcdc;"></div>
<div class="t" style="left:688.80px;top:1495.61px;font-size:24.67px;line-height:24.67px;font-weight:400;color:#1a1a1a;font-family:'Liberation Sans', sans-serif;">May 08, 2023 23:06:03.280 +05:30</div>
<div class="t" style="left:1441.60px;top:1496.18px;font-size:24.0px;line-height:24.0px;font-weight:400;color:#1a1a1a;font-family:'Liberation Sans', sans-serif;">GetUser</div>
<div class="t" style="left:2009.80px;top:1494.99px;font-size:25.4px;line-height:25.4px;font-weight:400;color:#1a1a1a;font-family:'Liberation Sans', sans-serif;">otel1-gin-gonic</div>
<div class="t" style="left:2380.80px;top:1496.35px;font-size:23.8px;line-height:23.8px;font-weight:400;color:#1a1a1a;font-family:'Liberation Sans', sans-serif;">0ms</div>
<div class="r" style="left:679.4px;top:1532px;width:2062.6px;height:2px;background:#dcdcdc;"></div>
<div class="t" style="left:688.80px;top:1545.61px;font-size:24.67px;line-height:24.67px;font-weight:400;color:#1a1a1a;font-family:'Liberation Sans', sans-serif;">May 08, 2023 23:06:05.908 +05:30</div>
<div class="t" style="left:1441.60px;top:1546.18px;font-size:24.0px;line-height:24.0px;font-weight:400;color:#1a1a1a;font-family:'Liberation Sans', sans-serif;">GetUserDetails</div>
<div class="t" style="left:2009.80px;top:1544.99px;font-size:25.4px;line-height:25.4px;font-weight:400;color:#1a1a1a;font-family:'Liberation Sans', sans-serif;">otel1-gin-gonic</div>
<div class="t" style="left:2380.80px;top:1546.35px;font-size:23.8px;line-height:23.8px;font-weight:400;color:#1a1a1a;font-family:'Liberation Sans', sans-serif;">0ms</div>
<div class="r" style="left:679.4px;top:1582px;width:2062.6px;height:2px;background:#dcdcdc;"></div>
<div class="r" style="left:2742px;top:650px;width:10px;height:912px;background:#b0b2cd;"></div>
<div class="r" style="left:2742px;top:634px;width:10px;height:445.3px;background:#4a4e8d;border-radius:5px;"></div>
<div style="position:absolute;left:0;top:0;width:160px;height:1562px;pointer-events:none;background:linear-gradient(to right, rgba(0,0,0,0.135) 0px, rgba(0,0,0,0.07) 25px, rgba(0,0,0,0.025) 55px, rgba(0,0,0,0) 90px);-webkit-mask-image:linear-gradient(to bottom, #000 0px, #000 1150px, rgba(0,0,0,0.4) 1400px, rgba(0,0,0,0) 1562px);"></div>
</body></html>
